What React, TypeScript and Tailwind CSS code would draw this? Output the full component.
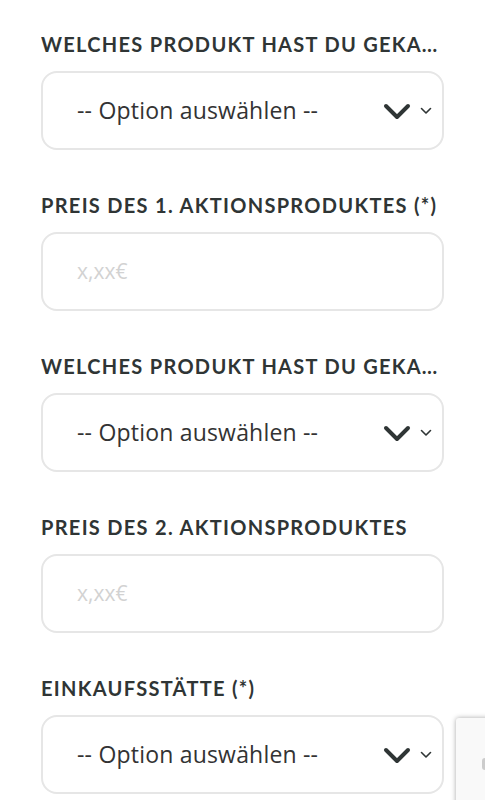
import React from "react";

const Chevrons = () => (
  <div className="flex items-center gap-[9px]">
    <svg width="28" height="18" viewBox="0 0 28 18" fill="none" stroke="#2f3535" strokeWidth="4" strokeLinecap="round" strokeLinejoin="round">
      <path d="M3 4l11 11L25 4" />
    </svg>
    <svg width="12" height="8" viewBox="0 0 12 8" fill="none" stroke="#2f3535" strokeWidth="1.6" strokeLinecap="round" strokeLinejoin="round">
      <path d="M1.5 1.5L6 6l4.5-4.5" />
    </svg>
  </div>
);

const Label = ({ text }: { text: string }) => (
  <div className="h-[26px] leading-[26px] text-[20px] font-bold text-[#2f3535] tracking-[1.3px] truncate">
    {text}
  </div>
);

const SelectBox = () => (
  <div className="mt-[14px] h-[79px] rounded-[16px] border-2 border-[#e6e6e6] bg-white flex items-center justify-between pl-[34px] pr-[10px]">
    <span className="text-[23px] tracking-[0.2px] text-[#333] font-['Open_Sans',sans-serif]">-- Option auswählen --</span>
    <Chevrons />
  </div>
);

const PriceBox = () => (
  <div className="mt-[14px] h-[79px] rounded-[16px] border-2 border-[#e6e6e6] bg-white flex items-center pl-[34px]">
    <span className="text-[21px] text-[#d2d2d2] font-['Open_Sans',sans-serif]">x,xx€</span>
  </div>
);

export default function App() {
  return (
    <div className="relative w-[485px] h-[800px] overflow-hidden bg-white font-['Lato',sans-serif]">
      <div className="flex flex-col gap-[42px] pl-[41px] pr-[41px] pt-[31px]">
        <div>
          <Label text="WELCHES PRODUKT HAST DU GEKAUFT? (*)" />
          <SelectBox />
        </div>
        <div>
          <Label text="PREIS DES 1. AKTIONSPRODUKTES (*)" />
          <PriceBox />
        </div>
        <div>
          <Label text="WELCHES PRODUKT HAST DU GEKAUFT?" />
          <SelectBox />
        </div>
        <div>
          <Label text="PREIS DES 2. AKTIONSPRODUKTES" />
          <PriceBox />
        </div>
        <div>
          <Label text="EINKAUFSSTÄTTE (*)" />
          <SelectBox />
        </div>
      </div>
      <div className="absolute left-[456px] top-[718px] w-[60px] h-[120px] bg-[#f9f9f9] rounded-[3px] shadow-[0_0_5px_rgba(0,0,0,0.35)]">
        <div className="absolute left-[26px] top-[40px] w-[6px] h-[12px] bg-[#ccc] rounded-sm" />
      </div>
    </div>
  );
}
